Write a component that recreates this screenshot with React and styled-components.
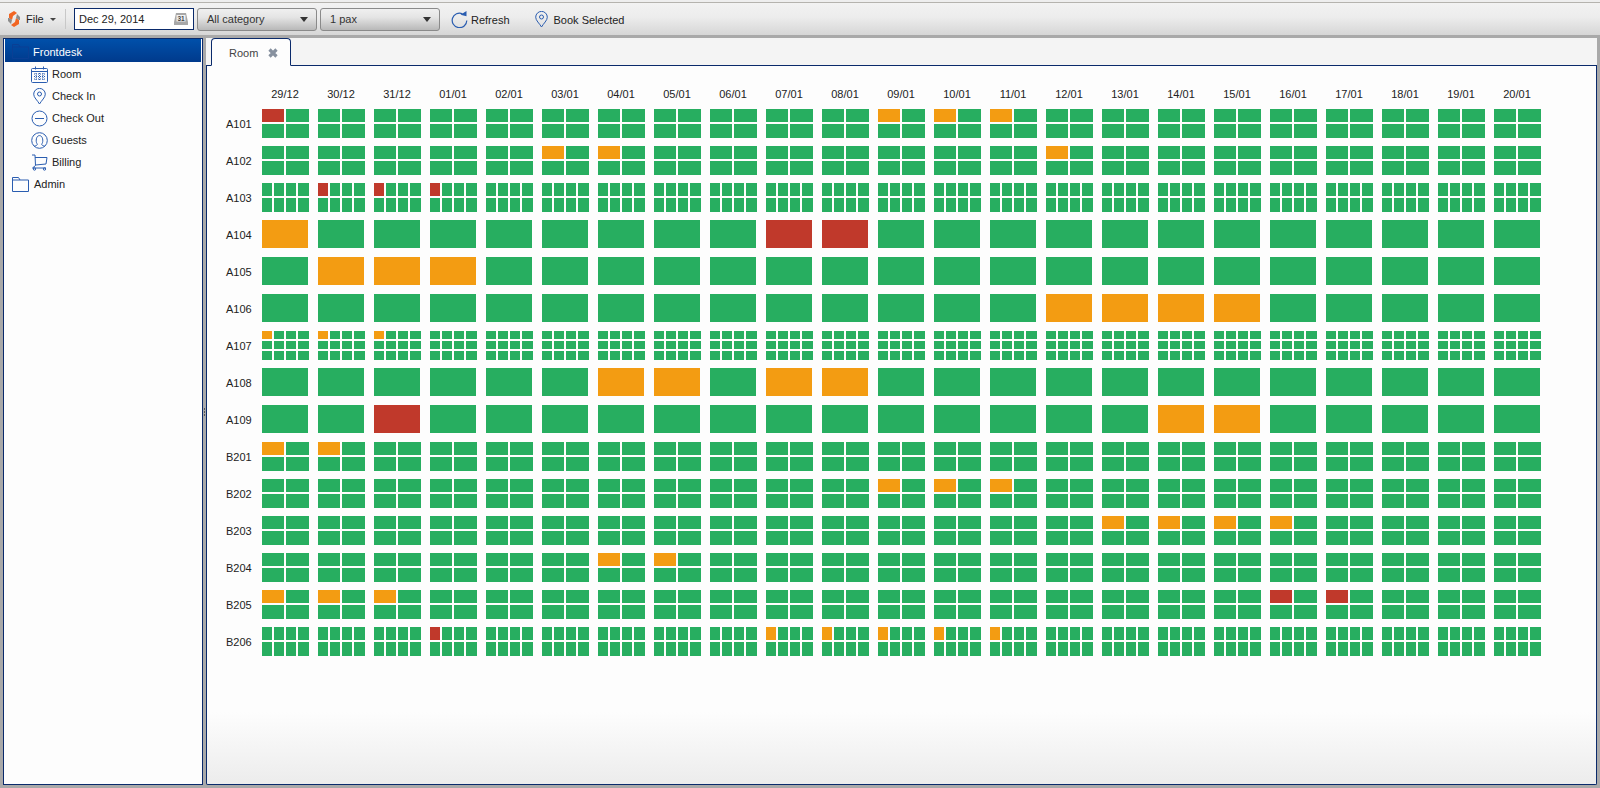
import React from "react";
import styled, { createGlobalStyle } from "styled-components";

const GREEN = "#27ae60";
const ORANGE = "#f39c12";
const RED = "#c0392b";
const NAVY = "#0a2a6b";
const ICON = "#2a5db0";

const GlobalStyle = createGlobalStyle`
  html, body {
    margin: 0;
    padding: 0;
    height: 100%;
    overflow: hidden;
    font-family: "Liberation Sans", Arial, sans-serif;
    font-size: 11px;
    color: #222;
  }
`;

const Page = styled.div`
  width: 1600px;
  height: 788px;
  display: flex;
  flex-direction: column;
  background: #a9a9a9;
`;

const ToolbarWrap = styled.div`
  padding-top: 2px;
  background: #eeeeee;
`;

const Toolbar = styled.div`
  height: 33px;
  box-sizing: border-box;
  border-top: 1px solid #b5b3ae;
  display: flex;
  align-items: center;
  padding-left: 8px;
  background: linear-gradient(#f2f2f2, #ececec 45%, #d6d6d6);
`;

const FileMenu = styled.div`
  display: flex;
  align-items: center;
  gap: 6px;
  width: 57px;
`;

const Caret = styled.span`
  width: 0;
  height: 0;
  border-left: 3px solid transparent;
  border-right: 3px solid transparent;
  border-top: 3px solid #444;
`;

const Divider = styled.div`
  width: 1px;
  height: 20px;
  background: #c8c8c8;
  margin-right: 8px;
`;

const DateField = styled.div`
  width: 120px;
  height: 22px;
  box-sizing: border-box;
  border: 1px solid ${NAVY};
  background: #fff;
  display: flex;
  align-items: center;
  justify-content: space-between;
  padding: 0 5px 0 4px;
  margin-right: 3px;
`;

const Select = styled.div`
  width: 120px;
  height: 23px;
  box-sizing: border-box;
  margin-right: 3px;
  border: 1px solid #8a8a8a;
  border-radius: 3px;
  background: linear-gradient(#f0f0f0, #e4e4e4 40%, #b8b8b8);
  display: flex;
  align-items: center;
  justify-content: space-between;
  padding: 0 8px 0 9px;
  color: #333;
`;

const SelectCaret = styled.span`
  width: 0;
  height: 0;
  border-left: 4px solid transparent;
  border-right: 4px solid transparent;
  border-top: 5px solid #333;
`;

const ToolButton = styled.div`
  display: flex;
  align-items: center;
  gap: ${(p) => p.$gap}px;
  margin-left: ${(p) => p.$ml}px;
  color: #222;
  span {
    padding-top: 1px;
  }
`;

const Body = styled.div`
  flex: 1;
  min-height: 0;
  display: flex;
  padding: 3px;
`;

const LeftPanel = styled.div`
  width: 200px;
  box-sizing: border-box;
  border: 1px solid ${NAVY};
  background: #fdfdfd;
  padding: 0 1px 1px;
`;

const TreeRow = styled.div`
  height: ${(p) => (p.$active ? 23 : 22)}px;
  box-sizing: border-box;
  display: flex;
  align-items: center;
  padding-top: ${(p) => (p.$active ? 2 : 0)}px;
  margin-bottom: ${(p) => (p.$active ? 1 : 0)}px;
  padding-left: ${(p) => p.$indent}px;
  gap: ${(p) => p.$gap}px;
  background: ${(p) => (p.$active ? "linear-gradient(#0050aa, #003a8c)" : "transparent")};
  color: ${(p) => (p.$active ? "#fff" : "#222")};
`;

const IconSlot = styled.span`
  width: 17px;
  display: flex;
  justify-content: center;
`;

const Splitter = styled.div`
  width: 3px;
  display: flex;
  flex-direction: column;
  align-items: center;
  justify-content: center;
  gap: 1px;
  i {
    width: 1px;
    height: 2px;
    background: #555;
  }
`;

const Main = styled.div`
  flex: 1;
  min-width: 0;
  display: flex;
  flex-direction: column;
`;

const TabStrip = styled.div`
  height: 28px;
  box-sizing: border-box;
  background: #f4f4f4;
  padding-left: 5px;
  display: flex;
  align-items: flex-end;
  border-bottom: 1px solid ${NAVY};
`;

const Tab = styled.div`
  width: 80px;
  height: 28px;
  margin-bottom: -1px;
  box-sizing: border-box;
  border: 1px solid ${NAVY};
  border-bottom: 1px solid #fdfdfd;
  border-radius: 4px 4px 0 0;
  background: #fdfdfd;
  display: flex;
  align-items: center;
  padding: 2px 0 0 17px;
  gap: 10px;
  color: #444;
`;

const Content = styled.div`
  flex: 1;
  min-height: 0;
  border: 1px solid ${NAVY};
  border-top: 0;
  border-radius: 0 0 2px 2px;
  background: linear-gradient(#fdfdfd 0, #fdfdfd 90%, #ececec 100%);
  padding: 19px 0 0 11px;
`;

const Sheet = styled.div`
  display: grid;
  grid-template-columns: 35px repeat(23, 47px);
  grid-template-rows: 16px;
  grid-auto-rows: 29px;
  column-gap: 9px;
  row-gap: 8px;
  align-items: start;
`;

const DateHead = styled.div`
  height: 16px;
  line-height: 18px;
  padding-right: 1px;
  text-align: center;
  color: #222;
`;

const RoomLabel = styled.div`
  height: 29px;
  line-height: 31px;
  padding-left: 8px;
  white-space: nowrap;
  color: #222;
`;

const Cell = styled.div`
  display: grid;
  width: ${(p) => (p.$n === 1 ? 46 : 47)}px;
  height: ${(p) => (p.$n === 1 ? 28 : 29)}px;
  gap: 2px;
  grid-template-columns: ${(p) => p.$cols};
  grid-template-rows: ${(p) => p.$rows};
`;

const Slot = styled.div`
  background: ${(p) => p.$c};
`;

const FolderIcon = ({ color }) => (
  <svg width="17" height="15" viewBox="0 0 17 15" fill="none" stroke={color} strokeWidth="1">
    <path d="M0.5 14.5V0.5H6.5L8 3H16.5V14.5Z" />
    <path d="M0.5 3H8" />
  </svg>
);

const LogoIcon = () => (
  <svg width="12" height="16" viewBox="0 0 12 16">
    <path d="M1 3L6 0L9 2L5 5L4 9L1 7Z" fill="#f26522" />
    <path d="M11 13L6 16L3 14L7 11L8 7L11 9Z" fill="#f26522" />
    <path d="M0 7L1 7L4 9L3 13L0 10Z" fill="#8c8c8c" />
    <path d="M12 9L11 9L8 7L9 3L12 6Z" fill="#8c8c8c" />
  </svg>
);

const CalendarIcon = () => (
  <svg width="17" height="17" viewBox="0 0 17 17" fill="none" stroke={ICON} strokeWidth="1">
    <rect x="0.5" y="2.5" width="16" height="14" rx="1" />
    <path d="M0.5 5.5H16.5M4.5 0.5V3.5M12.5 0.5V3.5" />
    <path d="M3 8H14M3 10.5H14M3 13H14M5 7V15M8.5 7V15M12 7V15" strokeDasharray="1 1" />
  </svg>
);

const PinIcon = () => (
  <svg width="13" height="17" viewBox="0 0 13 17" fill="none" stroke={ICON} strokeWidth="1">
    <path d="M6.5 16C4.5 12.5 0.7 9.5 0.7 6.2A5.8 5.8 0 0 1 12.3 6.2C12.3 9.5 8.5 12.5 6.5 16Z" />
    <circle cx="6.5" cy="6" r="2" />
  </svg>
);

const MinusIcon = () => (
  <svg width="17" height="17" viewBox="0 0 17 17" fill="none" stroke={ICON} strokeWidth="1">
    <circle cx="8.5" cy="8.5" r="7.5" />
    <path d="M4 8.5H13" />
  </svg>
);

const GuestIcon = () => (
  <svg width="17" height="17" viewBox="0 0 17 17" fill="none" stroke={ICON} strokeWidth="1">
    <circle cx="8.5" cy="8.5" r="7.8" />
    <path d="M3.5 14C6.5 13.5 6.6 12.6 5.9 11.5C4.6 9.5 5 3.6 8.5 3.6C12 3.6 12.4 9.5 11.1 11.5C10.4 12.6 10.5 13.5 13.5 14" />
  </svg>
);

const CartIcon = () => (
  <svg width="17" height="17" viewBox="0 0 17 17" fill="none" stroke={ICON} strokeWidth="1">
    <path d="M1 1H4L4.5 11.5L1.5 14H15" />
    <path d="M4 3.5H16L15 10L4.5 11" />
    <circle cx="3.5" cy="15" r="1.2" />
    <circle cx="13.5" cy="15" r="1.2" />
  </svg>
);

const RefreshIcon = () => (
  <svg width="17" height="17" viewBox="0 0 17 17" fill="none" stroke={ICON} strokeWidth="1.2">
    <path d="M11.5 2.7A7.3 7.3 0 1 0 15.8 9.5" />
    <path d="M9.5 3.8L15.5 5.2L15.5 0Z" fill={ICON} stroke="none" />
  </svg>
);

const DatePickerIcon = () => (
  <svg width="14" height="12" viewBox="0 0 14 12">
    <path d="M2 0H12L14 9V12H0V9Z" fill="#a8a8a8" />
    <rect x="2.5" y="2" width="9" height="6.5" fill="#f2f2f2" />
    <text x="7" y="7.6" fontSize="6.5" fontWeight="bold" textAnchor="middle" fill="#444">31</text>
  </svg>
);

const CloseIcon = () => (
  <svg width="10" height="10" viewBox="0 0 10 10" stroke="#87919f" strokeWidth="3.2">
    <path d="M1.5 1.5L8.5 8.5M8.5 1.5L1.5 8.5" />
  </svg>
);

const dates = [
  "29/12", "30/12", "31/12", "01/01", "02/01", "03/01", "04/01", "05/01",
  "06/01", "07/01", "08/01", "09/01", "10/01", "11/01", "12/01", "13/01",
  "14/01", "15/01", "16/01", "17/01", "18/01", "19/01", "20/01",
];

// c/r = slots across and down, marks = { date index: colour of first slot }
const rooms = [
  { name: "A101", c: 2, r: 2, marks: { 0: RED, 11: ORANGE, 12: ORANGE, 13: ORANGE } },
  { name: "A102", c: 2, r: 2, marks: { 5: ORANGE, 6: ORANGE, 14: ORANGE } },
  { name: "A103", c: 4, r: 2, marks: { 1: RED, 2: RED, 3: RED } },
  { name: "A104", c: 1, r: 1, marks: { 0: ORANGE, 9: RED, 10: RED } },
  { name: "A105", c: 1, r: 1, marks: { 1: ORANGE, 2: ORANGE, 3: ORANGE } },
  { name: "A106", c: 1, r: 1, marks: { 14: ORANGE, 15: ORANGE, 16: ORANGE, 17: ORANGE } },
  { name: "A107", c: 4, r: 3, marks: { 0: ORANGE, 1: ORANGE, 2: ORANGE } },
  { name: "A108", c: 1, r: 1, marks: { 6: ORANGE, 7: ORANGE, 9: ORANGE, 10: ORANGE } },
  { name: "A109", c: 1, r: 1, marks: { 2: RED, 16: ORANGE, 17: ORANGE } },
  { name: "B201", c: 2, r: 2, marks: { 0: ORANGE, 1: ORANGE } },
  { name: "B202", c: 2, r: 2, marks: { 11: ORANGE, 12: ORANGE, 13: ORANGE } },
  { name: "B203", c: 2, r: 2, marks: { 15: ORANGE, 16: ORANGE, 17: ORANGE, 18: ORANGE } },
  { name: "B204", c: 2, r: 2, marks: { 6: ORANGE, 7: ORANGE } },
  { name: "B205", c: 2, r: 2, marks: { 0: ORANGE, 1: ORANGE, 2: ORANGE, 18: RED, 19: RED } },
  { name: "B206", c: 4, r: 2, marks: { 3: RED, 9: ORANGE, 10: ORANGE, 11: ORANGE, 12: ORANGE, 13: ORANGE } },
];

const colTracks = { 1: "1fr", 2: "22px 23px", 4: "10px 10px 10px 11px" };
const rowTracks = { 1: "1fr", 2: "13px 14px", 3: "8px 8px 9px" };

const tree = [
  { label: "Room", icon: <CalendarIcon /> },
  { label: "Check In", icon: <PinIcon /> },
  { label: "Check Out", icon: <MinusIcon /> },
  { label: "Guests", icon: <GuestIcon /> },
  { label: "Billing", icon: <CartIcon /> },
];

const App = () => (
  <Page>
    <GlobalStyle />
    <ToolbarWrap>
      <Toolbar>
        <FileMenu>
          <LogoIcon />
          <span>File</span>
          <Caret />
        </FileMenu>
        <Divider />
        <DateField>
          <span>Dec 29, 2014</span>
          <DatePickerIcon />
        </DateField>
        <Select>
          <span>All category</span>
          <SelectCaret />
        </Select>
        <Select>
          <span>1 pax</span>
          <SelectCaret />
        </Select>
        <ToolButton $ml={8} $gap={3}>
          <RefreshIcon />
          <span>Refresh</span>
        </ToolButton>
        <ToolButton $ml={25} $gap={6}>
          <PinIcon />
          <span>Book Selected</span>
        </ToolButton>
      </Toolbar>
    </ToolbarWrap>
    <Body>
      <LeftPanel>
        <TreeRow $active $indent={7} $gap={4}>
          <FolderIcon color="#0a3f94" />
          <span>Frontdesk</span>
        </TreeRow>
        {tree.map((t) => (
          <TreeRow key={t.label} $indent={26} $gap={4}>
            <IconSlot>{t.icon}</IconSlot>
            <span>{t.label}</span>
          </TreeRow>
        ))}
        <TreeRow $indent={7} $gap={5}>
          <FolderIcon color={ICON} />
          <span>Admin</span>
        </TreeRow>
      </LeftPanel>
      <Splitter>
        <i />
        <i />
        <i />
      </Splitter>
      <Main>
        <TabStrip>
          <Tab>
            <span>Room</span>
            <CloseIcon />
          </Tab>
        </TabStrip>
        <Content>
          <Sheet>
            <div />
            {dates.map((d) => (
              <DateHead key={d}>{d}</DateHead>
            ))}
            {rooms.map((room) => (
              <React.Fragment key={room.name}>
                <RoomLabel>{room.name}</RoomLabel>
                {dates.map((d, i) => (
                  <Cell
                    key={d}
                    $n={room.c}
                    $cols={colTracks[room.c]}
                    $rows={rowTracks[room.r]}
                  >
                    {Array.from({ length: room.c * room.r }, (_, s) => (
                      <Slot key={s} $c={s === 0 && room.marks[i] ? room.marks[i] : GREEN} />
                    ))}
                  </Cell>
                ))}
              </React.Fragment>
            ))}
          </Sheet>
        </Content>
      </Main>
    </Body>
  </Page>
);

export default App;
